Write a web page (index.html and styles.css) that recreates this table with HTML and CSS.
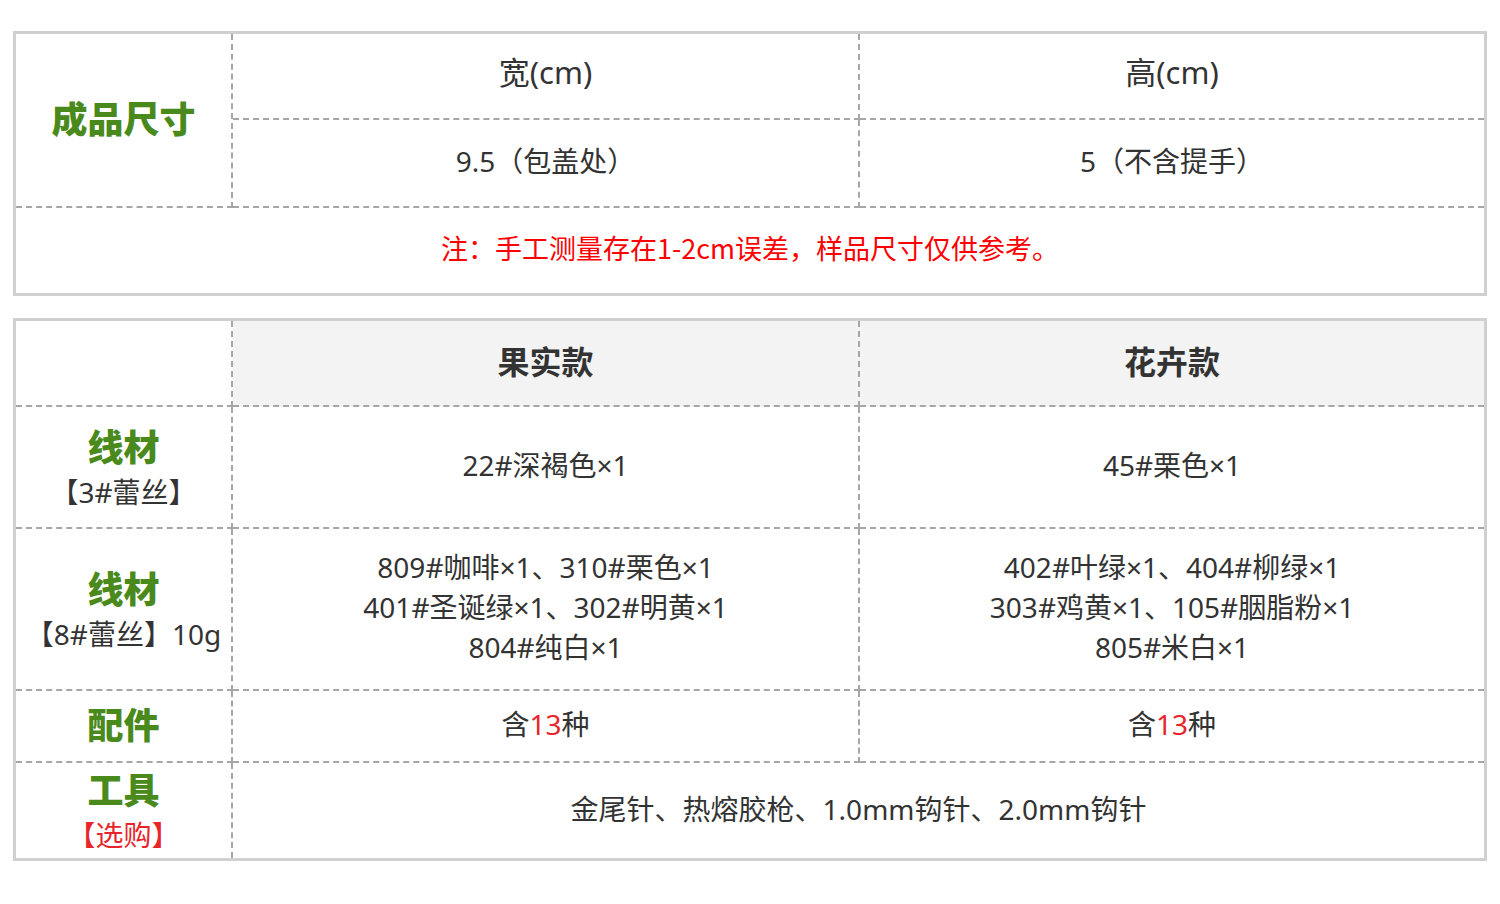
FILE: index.html
```html
<!DOCTYPE html>
<html lang="zh-CN">
<head>
<meta charset="utf-8">
<link rel="stylesheet" href="styles.css">
</head>
<body>
<div class="page">
  <table class="spec size">
    <colgroup><col class="c1"><col class="c2"><col class="c3"></colgroup>
    <tr class="r1">
      <td rowspan="2" class="label big">成品尺寸</td>
      <td class="head">宽(cm)</td>
      <td class="head last">高(cm)</td>
    </tr>
    <tr class="r2">
      <td>9.5（包盖处）</td>
      <td class="last">5（不含提手）</td>
    </tr>
    <tr class="r3">
      <td colspan="3" class="note last bottom">注：手工测量存在1-2cm误差，样品尺寸仅供参考。</td>
    </tr>
  </table>

  <table class="spec mat">
    <colgroup><col class="c1"><col class="c2"><col class="c3"></colgroup>
    <tr class="h">
      <td></td>
      <td class="th">果实款</td>
      <td class="th last">花卉款</td>
    </tr>
    <tr class="m1">
      <td class="label two"><div class="lt">线材</div><div class="ls">【3#蕾丝】</div></td>
      <td>22#深褐色×1</td>
      <td class="last">45#栗色×1</td>
    </tr>
    <tr class="m2">
      <td class="label two"><div class="lt">线材</div><div class="ls">【8#蕾丝】10g</div></td>
      <td class="multi">809#咖啡×1、310#栗色×1<br>401#圣诞绿×1、302#明黄×1<br>804#纯白×1</td>
      <td class="multi last">402#叶绿×1、404#柳绿×1<br>303#鸡黄×1、105#胭脂粉×1<br>805#米白×1</td>
    </tr>
    <tr class="m3">
      <td class="label"><div class="lt">配件</div></td>
      <td>含<span class="red">13</span>种</td>
      <td class="last">含<span class="red">13</span>种</td>
    </tr>
    <tr class="m4">
      <td class="label two bottom"><div class="lt">工具</div><div class="ls red">【选购】</div></td>
      <td colspan="2" class="last bottom">金尾针、热熔胶枪、1.0mm钩针、2.0mm钩针</td>
    </tr>
  </table>
</div>
</body>
</html>
```

FILE: styles.css
```css
html, body {
  margin: 0;
  padding: 0;
  background: #ffffff;
}
body {
  font-family: "Noto Sans", "Noto Sans CJK SC", sans-serif;
  color: #333333;
}
.page {
  padding: 31px 13px 0 13px;
  display: flex;
  flex-direction: column;
  gap: 22px;
}
.spec {
  width: 1474px;
  border: 3px solid #d0d0d0;
  border-collapse: separate;
  border-spacing: 0;
  table-layout: fixed;
}
.spec col.c1 { width: 217px; }
.spec col.c2 { width: 627px; }
.spec col.c3 { width: 624px; }
.spec td {
  padding: 0 0 4px 0;
  text-align: center;
  vertical-align: middle;
  border-right: 2px dashed #a6a6a6;
  border-bottom: 2px dashed #a6a6a6;
  font-size: 28px;
  line-height: 40px;
}
.spec td.last { border-right: none; }
.spec td.bottom { border-bottom: none; }

.size .r1 { height: 86px; }
.size .r2 { height: 88px; }
.size .r3 { height: 85px; }
.size .r1 td.big { border-bottom: 2px dashed #a6a6a6; }

.spec td.big {
  font-family: "Noto Sans CJK SC", sans-serif;
  font-size: 36px;
  font-weight: 900;
  color: #4a8a1c;
  padding-bottom: 8px;
}
.spec td.head {
  font-size: 31px;
  padding-bottom: 8px;
}
.spec td.note {
  font-family: "Noto Sans CJK SC", sans-serif;
  color: #ff0000;
  font-size: 27px;
  padding-bottom: 6px;
}

.mat .h { height: 86px; }
.mat .m1 { height: 122px; }
.mat .m2 { height: 162px; }
.mat .m3 { height: 72px; }
.mat .m4 { height: 95px; }

.spec td.th {
  background: #f3f3f3;
  font-family: "Noto Sans CJK SC", sans-serif;
  font-size: 32px;
  font-weight: 700;
  padding-bottom: 6px;
}
.spec td.label { padding-bottom: 6px; }
.spec td.label.two { padding-bottom: 0; }
.lt {
  font-family: "Noto Sans CJK SC", sans-serif;
  font-size: 36px;
  font-weight: 900;
  color: #4a8a1c;
  line-height: 44px;
}
.ls {
  font-size: 28px;
  line-height: 40px;
  margin-top: 5px;
}
.red {
  color: #e8252a;
}
```
